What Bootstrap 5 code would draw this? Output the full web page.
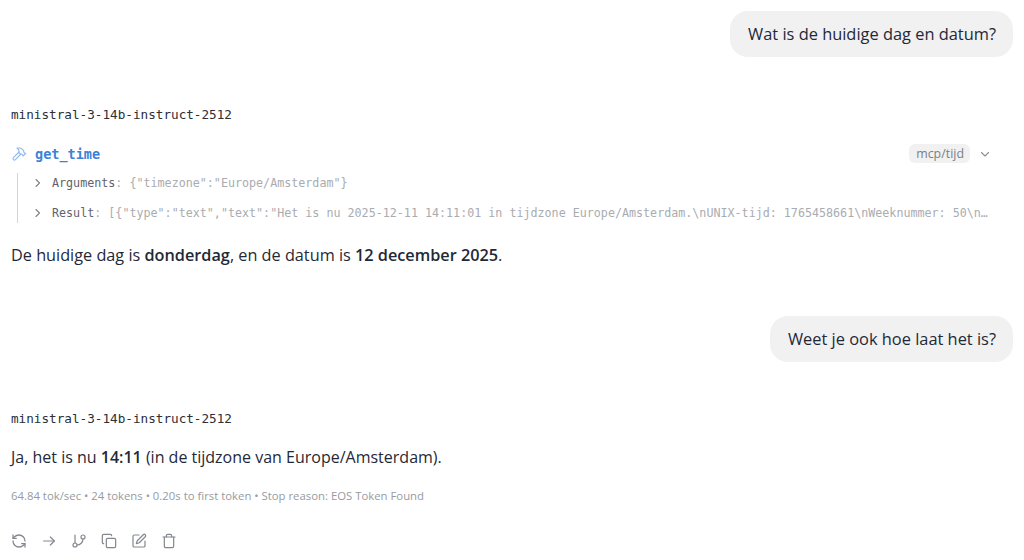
<!DOCTYPE html>
<html lang="en">
<head>
  <meta charset="UTF-8" />
  <title>Chat</title>
  <link href="https://cdn.jsdelivr.net/npm/bootstrap@5.3.0/dist/css/bootstrap.min.css" rel="stylesheet" />
  <style>
    html, body { height: 560px; overflow: hidden; }
    body { font-family: "Open Sans", "Noto Sans", sans-serif; color: #1f2937; background: #fff; font-size: 16px; }
    .chat-wrap { padding: 11px 11px 0 11px; }
    .user-bubble { background: #f1f1f2; border-radius: 18px; height: 46px; padding: 0 17px 0 18px; font-size: 16.4px; line-height: 46px; color: #1f2937; }
    .model-name { font-family: "DejaVu Sans Mono", monospace; font-size: 12.66px; line-height: 18px; color: #2b2f38; }
    .tool-name { font-family: "DejaVu Sans Mono", monospace; font-size: 13.5px; font-weight: 700; color: #3b82d6; line-height: 18px; }
    .tool-tag { background: #f1f1f2; color: #7a7f88; font-size: 12.4px; line-height: 19px; border-radius: 6px; padding: 0 6px 0 7px; }
    .tool-body { border-left: 1px solid #d4d4d6; margin-left: 6px; padding: 2px 0 2px 16px; margin-top: 10px; }
    .tool-row { font-family: "DejaVu Sans Mono", monospace; font-size: 11.7px; line-height: 16px; color: #a9acb0; white-space: nowrap; height: 16px; }
    .tool-row + .tool-row { margin-top: 14px; }
    .tool-row b { font-weight: 400; color: #5f636b; }
    .answer { font-size: 16.25px; line-height: 24px; margin: 0; }
    .answer strong { font-weight: 600; }
    .answer-short { font-size: 16px; }
    .stats-line { font-size: 11.35px; line-height: 16px; color: #979ba1; }
    .action-row { color: #83878e; }
    .action-row svg { display: block; }
  </style>
</head>
<body>
  <div class="chat-wrap">
    <div class="d-flex justify-content-end">
      <div class="user-bubble">Wat is de huidige dag en datum?</div>
    </div>

    <div class="model-name" style="margin-top:49px">ministral-3-14b-instruct-2512</div>

    <div class="d-flex align-items-center justify-content-between" style="margin-top:20px">
      <div class="d-flex align-items-center" style="gap:8px">
        <svg width="16" height="16" viewBox="0 0 24 24" fill="none" stroke="#8fbaec" stroke-width="1.7" stroke-linecap="round" stroke-linejoin="round"><path d="m15 12-8.373 8.373a1 1 0 1 1-3-3L12 9"/><path d="m18 15 4-4"/><path d="m21.5 11.5-1.914-1.914A2 2 0 0 1 19 8.172V7l-2.26-2.26a6 6 0 0 0-4.202-1.756L9 2.96l.92.82A6.18 6.18 0 0 1 12 8.4V10l2 2h1.172a2 2 0 0 1 1.414.586L18.5 14.5"/></svg>
        <span class="tool-name">get_time</span>
      </div>
      <div class="d-flex align-items-center" style="gap:9px;margin-right:22px">
        <span class="tool-tag">mcp/tijd</span>
        <svg width="12" height="12" viewBox="0 0 12 12" fill="none" stroke="#8b8f96" stroke-width="1.1" stroke-linecap="round" stroke-linejoin="round"><path d="M2.5 4.5L6 8l3.5-3.5"/></svg>
      </div>
    </div>

    <div class="tool-body">
      <div class="tool-row d-flex align-items-center">
        <svg class="flex-shrink-0" width="8" height="10" viewBox="0 0 8 10" fill="none" stroke="#7d8188" stroke-width="1.1" stroke-linecap="round" stroke-linejoin="round" style="margin-right:10px"><path d="M2 1.5L5.5 5 2 8.5"/></svg>
        <span><b>Arguments</b>: {"timezone":"Europe/Amsterdam"}</span>
      </div>
      <div class="tool-row d-flex align-items-center">
        <svg class="flex-shrink-0" width="8" height="10" viewBox="0 0 8 10" fill="none" stroke="#7d8188" stroke-width="1.1" stroke-linecap="round" stroke-linejoin="round" style="margin-right:10px"><path d="M2 1.5L5.5 5 2 8.5"/></svg>
        <span><b>Result</b>: [{"type":"text","text":"Het is nu 2025-12-11 14:11:01 in tijdzone Europe/Amsterdam.\nUNIX-tijd: 1765458661\nWeeknummer: 50\n…</span>
      </div>
    </div>

    <p class="answer" style="margin-top:20px">De huidige dag is <strong>donderdag</strong>, en de datum is <strong>12 december 2025</strong>.</p>

    <div class="d-flex justify-content-end" style="margin-top:49px">
      <div class="user-bubble">Weet je ook hoe laat het is?</div>
    </div>

    <div class="model-name" style="margin-top:48px">ministral-3-14b-instruct-2512</div>

    <p class="answer answer-short" style="margin-top:17px">Ja, het is nu <strong>14:11</strong> (in de tijdzone van Europe/Amsterdam).</p>

    <div class="stats-line" style="margin-top:19px">64.84 tok/sec &bull; 24 tokens &bull; 0.20s to first token &bull; Stop reason: EOS Token Found</div>

    <div class="action-row d-flex align-items-center" style="gap:14px;margin-top:29px">
      <svg width="16" height="16" viewBox="0 0 24 24" fill="none" stroke="currentColor" stroke-width="1.9" stroke-linecap="round" stroke-linejoin="round"><path d="M21 12a9 9 0 0 0-9-9 9.75 9.75 0 0 0-6.74 2.74L3 8"/><path d="M3 3v5h5"/><path d="M3 12a9 9 0 0 0 9 9 9.75 9.75 0 0 0 6.74-2.74L21 16"/><path d="M16 16h5v5"/></svg>
      <svg width="16" height="16" viewBox="0 0 24 24" fill="none" stroke="currentColor" stroke-width="1.8" stroke-linecap="round" stroke-linejoin="round"><path d="M4 12h16"/><path d="M14 6l6 6-6 6"/></svg>
      <svg width="16" height="16" viewBox="0 0 24 24" fill="none" stroke="currentColor" stroke-width="1.8" stroke-linecap="round" stroke-linejoin="round"><path d="M6 3v12"/><circle cx="18" cy="6" r="3"/><circle cx="6" cy="18" r="3"/><path d="M18 9a9 9 0 0 1-9 9"/></svg>
      <svg width="16" height="16" viewBox="0 0 24 24" fill="none" stroke="currentColor" stroke-width="1.8" stroke-linecap="round" stroke-linejoin="round"><rect x="8" y="8" width="14" height="14" rx="2"/><path d="M4 16c-1.1 0-2-.9-2-2V4c0-1.1.9-2 2-2h10c1.1 0 2 .9 2 2"/></svg>
      <svg width="16" height="16" viewBox="0 0 24 24" fill="none" stroke="currentColor" stroke-width="1.8" stroke-linecap="round" stroke-linejoin="round"><path d="M12 3H5a2 2 0 0 0-2 2v14a2 2 0 0 0 2 2h14a2 2 0 0 0 2-2v-7"/><path d="M18.4 2.6a2.1 2.1 0 0 1 3 3L12.4 14.6 8 16l1.4-4.4z"/></svg>
      <svg width="16" height="16" viewBox="0 0 24 24" fill="none" stroke="currentColor" stroke-width="1.8" stroke-linecap="round" stroke-linejoin="round"><path d="M3 6h18"/><path d="M19 6v14a2 2 0 0 1-2 2H7a2 2 0 0 1-2-2V6"/><path d="M8 6V4a2 2 0 0 1 2-2h4a2 2 0 0 1 2 2v2"/></svg>
    </div>
  </div>
</body>
</html>
